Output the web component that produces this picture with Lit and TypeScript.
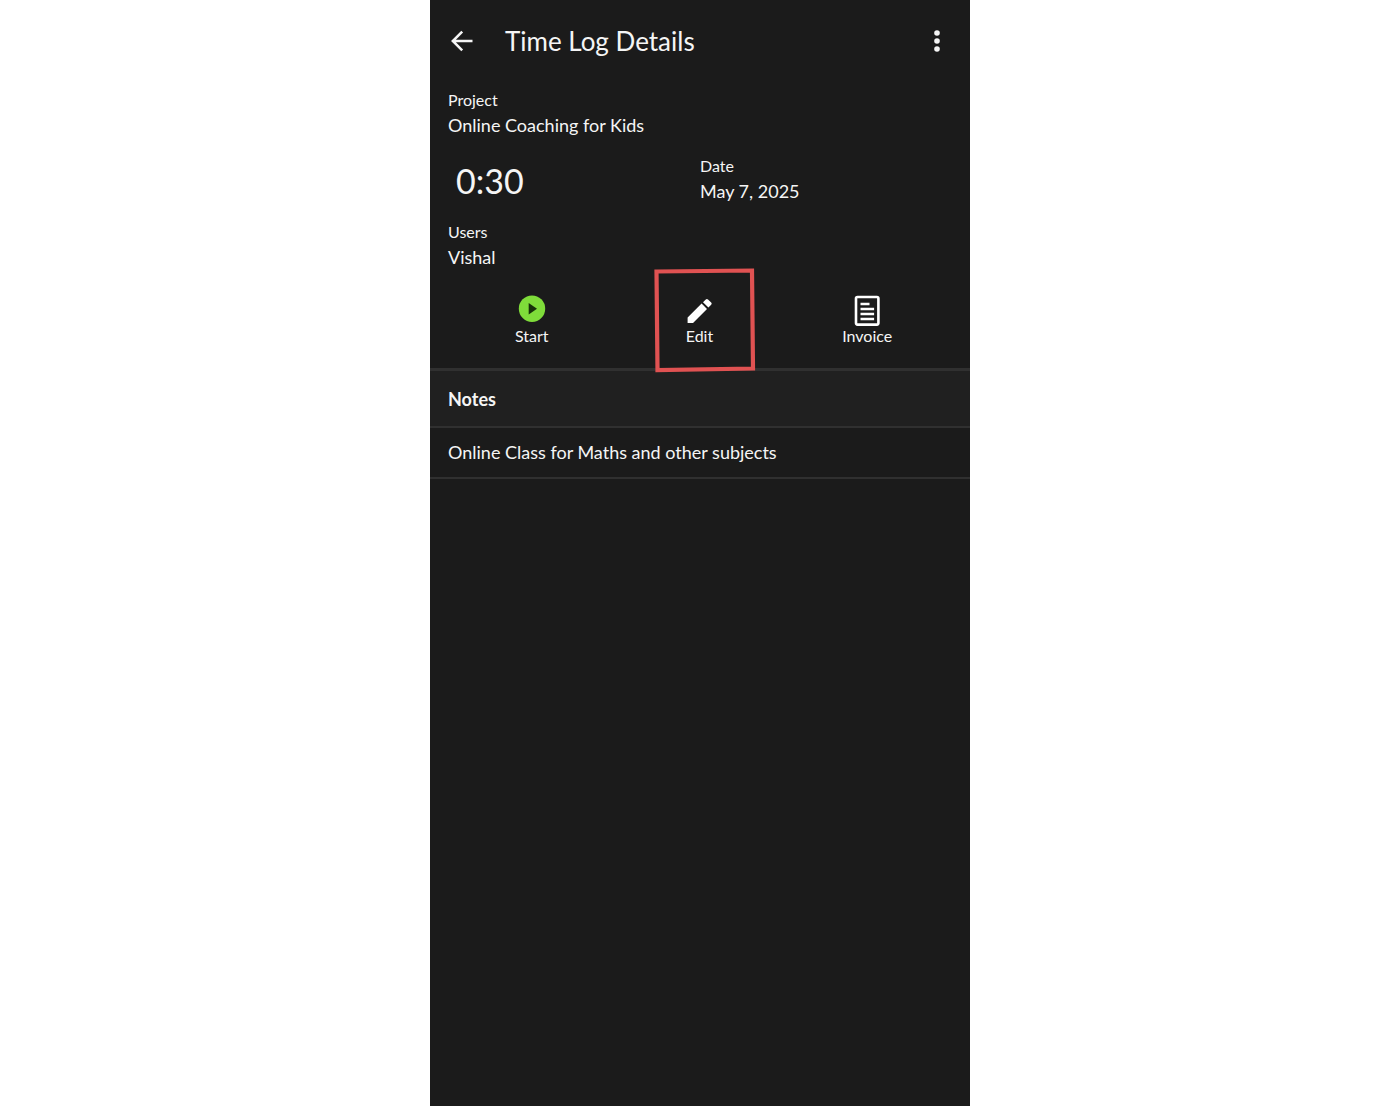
import { LitElement, html, css, svg } from "lit";
import { customElement, property } from "lit/decorators.js";

const icons = {
  back: svg`<path d="M22.5 12H3M12.2 2.6 2.8 12l9.4 9.4" fill="none" stroke="currentColor" stroke-width="2.5"/>`,
  more: svg`<circle cx="12" cy="4" r="2.8" fill="currentColor"/><circle cx="12" cy="12" r="2.8" fill="currentColor"/><circle cx="12" cy="20" r="2.8" fill="currentColor"/>`,
};

@customElement("detail-field")
export class DetailField extends LitElement {
  @property() label = "";
  @property() value = "";

  static styles = css`
    :host {
      display: block;
    }
    .label {
      font-size: 16px;
      line-height: 20px;
    }
    .value {
      font-size: 18px;
      line-height: 30px;
    }
  `;

  render() {
    return html`<div class="label">${this.label}</div>
      <div class="value">${this.value}</div>`;
  }
}

@customElement("app-root")
export class AppRoot extends LitElement {
  static styles = css`
    :host {
      display: block;
      min-height: 100vh;
      background: #fff;
      font-family: Lato, "Liberation Sans", sans-serif;
      color: #f5f5f5;
    }
    .screen {
      box-sizing: border-box;
      max-width: 540px;
      min-height: 100vh;
      margin: 0 auto;
      background: #1b1b1b;
    }
    button {
      border: 0;
      padding: 0;
      background: none;
      color: inherit;
      font: inherit;
      cursor: pointer;
    }
    svg {
      display: block;
    }
    .bar {
      display: flex;
      align-items: center;
      height: 82px;
      padding: 0 21px 0 20px;
    }
    .title {
      flex: 1;
      margin: 0 0 0 31px;
      font-size: 26px;
      line-height: 34px;
      font-weight: 400;
    }
    .details {
      display: grid;
      grid-template-columns: 1fr 1fr;
      row-gap: 16px;
      padding: 8px 18px 0;
    }
    .wide {
      grid-column: 1 / -1;
    }
    .duration {
      padding-left: 8px;
      font-size: 34px;
      line-height: 50px;
    }
    .actions {
      display: grid;
      grid-template-columns: repeat(3, 1fr);
      padding: 23px 19px 23px 18px;
    }
    .cell {
      position: relative;
      display: flex;
      justify-content: center;
    }
    .action {
      display: flex;
      flex-direction: column;
      align-items: center;
      font-size: 16px;
      line-height: 18px;
    }
    .mark {
      position: absolute;
      left: 36px;
      top: -29px;
      pointer-events: none;
    }
    .heading {
      margin: 0;
      padding: 15px 18px 13px;
      border-top: 3px solid #303030;
      border-bottom: 2px solid #303030;
      background: #202020;
      font-size: 18px;
      line-height: 27px;
      font-weight: 700;
    }
    .note {
      margin: 0;
      padding: 11px 18px;
      border-bottom: 2px solid #303030;
      font-size: 18px;
      line-height: 27px;
    }
  `;

  render() {
    return html`
      <main class="screen">
        <header class="bar">
          <button aria-label="Back">
            <svg width="24" height="24" viewBox="0 0 24 24">${icons.back}</svg>
          </button>
          <h1 class="title">Time Log Details</h1>
          <button aria-label="More options">
            <svg width="24" height="24" viewBox="0 0 24 24">${icons.more}</svg>
          </button>
        </header>
        <section class="details">
          <detail-field class="wide" label="Project" value="Online Coaching for Kids"></detail-field>
          <div class="duration">0:30</div>
          <detail-field label="Date" value="May 7, 2025"></detail-field>
          <detail-field class="wide" label="Users" value="Vishal"></detail-field>
        </section>
        <section class="actions">
          <div class="cell">
            <button class="action">
              <svg width="32" height="32" viewBox="0 0 32 32">
                <circle cx="16" cy="13.7" r="13.2" fill="#7fdc3a" />
                <path d="M12.7 8v11.4L21 13.7z" fill="#17300a" />
              </svg>
              Start
            </button>
          </div>
          <div class="cell">
            <button class="action">
              <svg width="32" height="32" viewBox="0 0 32 32">
                <path
                  d="M4.6 22.6V28h5.4L24 14l-5.4-5.4zM28.2 9.8a1.6 1.6 0 0 0 0-2.2l-3.200-3.200a1.6 1.6 0 0 0-2.200 0l-2.800 2.800 5.400 5.400z"
                  fill="#fff"
                />
              </svg>
              Edit
            </button>
            <svg class="mark" width="104" height="108" viewBox="0 0 104 108">
              <path d="M4.5 5.5 100 4.5 101 102.5 5.5 104z" fill="none" stroke="#e05252" stroke-width="4.2" />
            </svg>
          </div>
          <div class="cell">
            <button class="action">
              <svg width="32" height="32" viewBox="0 0 32 32">
                <rect x="5" y="2" width="22.4" height="27.6" rx="1.5" fill="none" stroke="#fff" stroke-width="2.6" />
                <path d="M9.5 9h9M9.5 14h13.600M9.5 19h13.600M9.5 24h13.600" stroke="#fff" stroke-width="2.4" />
              </svg>
              Invoice
            </button>
          </div>
        </section>
        <section>
          <h2 class="heading">Notes</h2>
          <p class="note">Online Class for Maths and other subjects</p>
        </section>
      </main>
    `;
  }
}
